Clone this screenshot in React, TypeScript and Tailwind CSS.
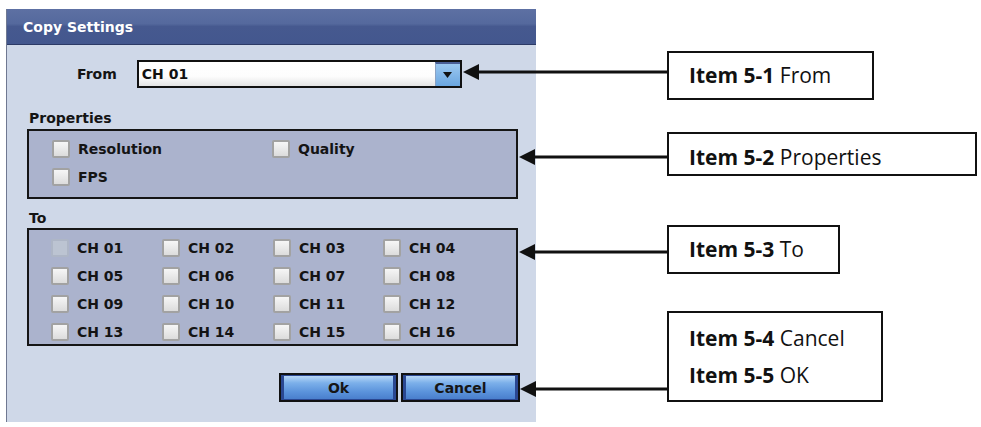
import React from "react";

const ui = "font-['DejaVu_Sans',Verdana,sans-serif] font-bold";

function Check({ disabled = false }: { disabled?: boolean }) {
  return (
    <span
      className={
        disabled
          ? "block w-[18px] h-[18px] shrink-0 rounded-[2px] border-2 border-[#aeb6c6] bg-[#bcc4d2]"
          : "block w-[18px] h-[18px] shrink-0 rounded-[2px] border-2 border-[#a2a2a2] bg-[linear-gradient(to_bottom,#f6f6f6,#dcdcdc)]"
      }
    />
  );
}

function Item({ label, disabled = false }: { label: string; disabled?: boolean }) {
  return (
    <div className="flex items-center gap-[8px] h-[24px]">
      <Check disabled={disabled} />
      <span className={`${ui} text-[14px] leading-none text-[#141414]`}>{label}</span>
    </div>
  );
}

function Btn({ children }: { children: React.ReactNode }) {
  return (
    <div className="w-[119px] h-[29px] border-2 border-[#111] bg-[#111]">
      <div className="w-full h-full border border-[#2a4791] border-l-[3px] border-r-[3px] bg-[linear-gradient(to_bottom,#b8d6f6_0%,#7cb0ea_30%,#5a92db_70%,#4a7fcd_100%)] flex items-center justify-center">
        <span className={`${ui} text-[14px] leading-none text-[#161616]`}>{children}</span>
      </div>
    </div>
  );
}

function Callout({ bold, rest, className }: { bold: string; rest: string; className: string }) {
  return (
    <div className={`border-2 border-[#111] bg-white pl-[20px] ${className}`}>
      <span className="font-['Open_Sans',sans-serif] text-[21px] text-[#111] whitespace-nowrap">
        <b className="font-bold">{bold}</b> {rest}
      </span>
    </div>
  );
}

export default function App() {
  const chans = Array.from({ length: 16 }, (_, i) => `CH ${String(i + 1).padStart(2, "0")}`);
  return (
    <div className="relative w-[981px] h-[427px] bg-white overflow-hidden flex">
      {/* Dialog */}
      <div className="ml-[6px] mt-[9px] w-[530px] h-[413px] flex flex-col border-l border-[#6f7891] bg-[#cfd8e8]">
        <div className="h-[36px] shrink-0 flex items-center pl-[16px] border-b border-[#2c3a66] bg-[linear-gradient(to_bottom,#5d70a3_0%,#55699d_42%,#46598f_50%,#43578e_100%)]">
          <span className={`${ui} text-[14px] leading-none text-white`}>Copy Settings</span>
        </div>
        <div className="flex flex-col">
          {/* From row */}
          <div className="mt-[15px] flex items-center pl-[70px]">
            <span className={`${ui} text-[14px] leading-none text-[#141414]`}>From</span>
            <div className="ml-[20px] w-[325px] h-[28px] border-2 border-[#111] flex bg-[linear-gradient(to_bottom,#ffffff_0%,#fdfdfd_60%,#e4e4e4_100%)]">
              <div className="flex-1 flex items-center pl-[3px]">
                <span className={`${ui} text-[14px] leading-none text-[#111]`}>CH 01</span>
              </div>
              <div className="w-[25px] h-full border-l border-[#8aa2c4] border-t-2 border-t-[#4a5f96] bg-[linear-gradient(to_bottom,#9cc8f0,#6aa6e0)] flex items-center justify-center">
                <svg width="9" height="6" viewBox="0 0 9 6">
                  <polygon points="0,0 9,0 4.5,6" fill="#111" />
                </svg>
              </div>
            </div>
          </div>

          {/* Properties */}
          <div className={`${ui} mt-[22px] ml-[22px] text-[14px] leading-[16px] text-[#141414]`}>Properties</div>
          <div className="mt-[3px] ml-[20px] w-[491px] h-[70px] border-2 border-[#151515] bg-[#abb3cd] grid grid-cols-[220px_220px] auto-rows-[24px] gap-y-[4px] pt-[6px] pl-[23px]">
            <Item label="Resolution" />
            <Item label="Quality" />
            <Item label="FPS" />
          </div>

          {/* To */}
          <div className={`${ui} mt-[11px] ml-[22px] text-[14px] leading-[16px] text-[#141414]`}>To</div>
          <div className="mt-[2px] ml-[20px] w-[491px] h-[118px] border-2 border-[#151515] bg-[#abb3cd] grid grid-cols-[111px_111px_110px_110px] auto-rows-[24px] gap-y-[4px] pt-[6px] pl-[22px]">
            {chans.map((c, i) => (
              <Item key={c} label={c} disabled={i === 0} />
            ))}
          </div>

          {/* Buttons */}
          <div className="mt-[27px] flex justify-end gap-[3px] pr-[16px]">
            <Btn>Ok</Btn>
            <Btn>Cancel</Btn>
          </div>
        </div>
      </div>

      {/* Callouts */}
      <div className="ml-[131px] flex flex-col items-start">
        <Callout bold="Item 5-1" rest="From" className="mt-[51px] w-[207px] h-[49px] flex items-center" />
        <Callout bold="Item 5-2" rest="Properties" className="mt-[32px] w-[310px] h-[44px] pt-[8px]" />
        <Callout bold="Item 5-3" rest="To" className="mt-[49px] w-[173px] h-[49px] flex items-center" />
        <div className="mt-[37px] w-[216px] h-[91px] border-2 border-[#111] bg-white pl-[20px] pt-[10px] flex flex-col gap-[6px] font-['Open_Sans',sans-serif] text-[21px] leading-[31px] text-[#111]">
          <div className="whitespace-nowrap"><b className="font-bold">Item 5-4</b> Cancel</div>
          <div className="whitespace-nowrap"><b className="font-bold">Item 5-5</b> OK</div>
        </div>
      </div>

      {/* Arrows overlay */}
      <svg className="absolute inset-0 pointer-events-none" width="981" height="427" viewBox="0 0 981 427">
        <g fill="#111" stroke="#111">
          <line x1="476" y1="72" x2="669" y2="72" strokeWidth="3" />
          <polygon points="463,72 479,64 479,80" stroke="none" />
          <line x1="532" y1="157" x2="669" y2="157" strokeWidth="3" />
          <polygon points="519,157 535,149 535,165" stroke="none" />
          <line x1="532" y1="252" x2="669" y2="252" strokeWidth="3" />
          <polygon points="519,252 535,244 535,260" stroke="none" />
          <line x1="533" y1="389" x2="669" y2="389" strokeWidth="3" />
          <polygon points="520,389 536,381 536,397" stroke="none" />
        </g>
      </svg>
    </div>
  );
}
